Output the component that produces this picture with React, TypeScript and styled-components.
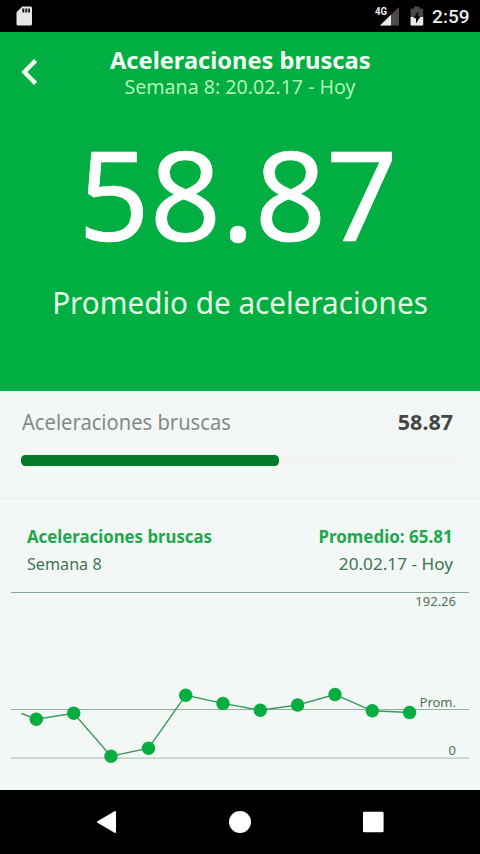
import React from 'react';
import styled, { createGlobalStyle } from 'styled-components';

const GlobalStyle = createGlobalStyle`
  *, *::before, *::after { box-sizing: border-box; }
  body { margin: 0; background: #000; }
`;

const Screen = styled.div`
  display: flex;
  flex-direction: column;
  width: 480px;
  height: 854px;
  overflow: hidden;
  background: #f3f7f5;
  font-family: "Noto Sans", "Open Sans", sans-serif;
  white-space: nowrap;
`;

const StatusBar = styled.div`
  display: flex;
  align-items: center;
  justify-content: space-between;
  height: 32px;
  flex: none;
  padding: 0 10.5px 0 16px;
  background: #000;
  color: #ececec;
`;

const StatusIcons = styled.div`
  display: flex;
  align-items: center;
`;

const Clock = styled.span`
  margin-left: 8.5px;
  font: 500 19px/32px Roboto, sans-serif;
  padding-top: 1px;
`;

const Hero = styled.header`
  display: flex;
  flex-direction: column;
  height: 359px;
  flex: none;
  background: #00ae41;
  color: #fff;
`;

const TitleBar = styled.div`
  display: grid;
  grid-template-columns: 60px 1fr 60px;
  padding-top: 14px;
`;

const BackButton = styled.button`
  display: flex;
  align-items: center;
  height: 52px;
  padding: 0 0 0 21px;
  border: 0;
  background: none;
`;

const TitleGroup = styled.div`
  display: flex;
  flex-direction: column;
  align-items: center;
`;

interface Stretch { $x?: number; $from?: 'left' | 'center' | 'right' }

const Label = styled.span<Stretch>`
  display: block;
  transform: scaleX(${p => p.$x ?? 1});
  transform-origin: ${p => p.$from ?? 'left'} center;
`;

const Title = styled(Label)`
  font-size: 24px;
  font-weight: 700;
  line-height: 28px;
  color: #f4fff4;
`;

const Subtitle = styled(Label)`
  font-size: 19.6px;
  line-height: 25px;
  color: #b0f5b8;
`;

const BigValue = styled(Label)`
  margin-top: 24px;
  padding-right: 4px;
  font-size: 125px;
  line-height: 140px;
  text-align: center;
  -webkit-text-stroke: 0.7px #fff;
`;

const Caption = styled(Label)`
  margin-top: 19px;
  font-size: 31px;
  line-height: 40px;
  text-align: center;
  color: #e2fbe2;
`;

const Stat = styled.section`
  height: 108px;
  flex: none;
  padding: 16px 20px 0 21px;
  border-bottom: 1px solid #e8eeea;
`;

const Row = styled.div`
  display: flex;
  justify-content: space-between;
`;

const StatName = styled(Label)`
  margin-left: 0.5px;
  font-size: 21.5px;
  line-height: 30px;
  color: #858a87;
`;

const StatValue = styled(Label)`
  margin-right: 7px;
  font-size: 21.8px;
  font-weight: 700;
  line-height: 30px;
  color: #454745;
`;

const Track = styled.div`
  height: 11px;
  margin-top: 18px;
  border-radius: 5px;
  background: #f4f4f4;
`;

const Fill = styled.div`
  width: 258px;
  height: 100%;
  border-radius: 4.5px;
  background: #037a2a;
`;

const ChartCard = styled.section`
  display: flex;
  flex-direction: column;
  flex: 1;
`;

const CardHead = styled.div`
  display: grid;
  row-gap: 4px;
  height: 91px;
  align-content: start;
  padding: 25px 27px 0 26.5px;
`;

const CardTitle = styled(Label)`
  font-size: 17.4px;
  font-weight: 700;
  line-height: 24px;
  color: #20a84e;
`;

const CardText = styled(Label)`
  font-size: 17px;
  line-height: 24px;
  color: #3f7452;
`;

const ChartSvg = styled.svg`
  display: block;
  text { font-family: "Noto Sans", sans-serif; font-size: 13px; fill: #4c7558; text-anchor: end; }
`;

const NavBar = styled.nav`
  display: flex;
  justify-content: center;
  height: 64px;
  flex: none;
  background: #000;
`;

const points: [number, number][] = [
  [36.3, 129.2], [73.7, 123.2], [111, 166.2], [148.5, 158.2], [185.7, 105.3], [223, 113.4],
  [260.3, 120.3], [297.6, 115], [335, 104.5], [372.3, 120.8], [409.6, 122.5],
];

function Chart() {
  const path = [[21.5, 123.5], ...points].map(p => p.join(',')).join(' ');
  return (
    <ChartSvg width="480" height="200" viewBox="0 0 480 200">
      <g strokeWidth="1">
        <path d="M11 2.5H469" stroke="#84a892" />
        <path d="M11 119.5H469" stroke="#8fb29c" />
        <path d="M11 168.1H469" stroke="#a6bcae" />
      </g>
      <polyline points={path} fill="none" stroke="#3d9a5c" strokeWidth="1.4" />
      {points.map(([x, y]) => <circle key={x} cx={x} cy={y} r="6.7" fill="#07ae3f" />)}
      <text x="456" y="16.2">192.26</text>
      <text x="456" y="117">Prom.</text>
      <text x="456" y="165.2">0</text>
    </ChartSvg>
  );
}

const SdCardIcon = () => (
  <svg width="17" height="20" viewBox="0 0 17 20">
    <path d="M6.3 .5H14.5Q16 .5 16 2V18Q16 19.5 14.5 19.5H2Q.5 19.5 .5 18V6.2Z" fill="#e6e6e6" />
    <path d="M6.3 2.5H8.3V6.5H6.3ZM9.3 2.5H11.3V6.5H9.3ZM12.2 2.5H14V6.5H12.2Z" fill="#1c1c1c" />
  </svg>
);

const SignalText = styled.text`
  font: 700 10.5px Roboto, sans-serif;
`;

const SignalIcon = () => (
  <svg width="26" height="22" viewBox="0 0 26 22">
    <path d="M25 2V20.5H6Z" fill="#4a4a4a" />
    <path d="M17 9.8V20.5H6Z" fill="#ececec" />
    <SignalText x="1" y="10" fill="#ececec" stroke="#000" strokeWidth="1.6" paintOrder="stroke" textLength="12" lengthAdjust="spacingAndGlyphs">4G</SignalText>
  </svg>
);

const BatterySvg = styled.svg`
  margin-left: 10px;
`;

const BatteryIcon = () => (
  <BatterySvg width="14" height="20" viewBox="0 0 14 20">
    <path d="M4 .5H9.5V2.5H12Q13.2 2.5 13.2 3.7V18.3Q13.2 19.5 12 19.5H1.8Q.6 19.5 .6 18.3V3.7Q.6 2.5 1.8 2.5H4Z" fill="#484848" />
    <path d="M.6 11H13.2V18.3Q13.2 19.5 12 19.5H1.8Q.6 19.5 .6 18.3Z" fill="#ececec" />
    <path d="M8.2 5V10.4H10.6L6 17.6V12.3H3.4Z" fill="#0a0a0a" />
  </BatterySvg>
);

const BackIcon = () => (
  <svg width="17" height="28" viewBox="0 0 17 28">
    <path d="M14.6 2.5L3.4 14L14.6 25.5" fill="none" stroke="#f2fff2" strokeWidth="4.5" />
  </svg>
);

const NavIcons = () => (
  <svg width="480" height="64" viewBox="0 0 480 64" fill="#fff">
    <path d="M115 22V42L98 32Z" stroke="#fff" strokeWidth="2" strokeLinejoin="round" />
    <circle cx="240" cy="32" r="11" />
    <rect x="363" y="21.8" width="20.6" height="20.4" rx="1.3" />
  </svg>
);

export default function App() {
  return (
    <>
      <GlobalStyle />
      <Screen>
        <StatusBar>
          <SdCardIcon />
          <StatusIcons>
            <SignalIcon />
            <BatteryIcon />
            <Clock>2:59</Clock>
          </StatusIcons>
        </StatusBar>
        <Hero>
          <TitleBar>
            <BackButton aria-label="Volver"><BackIcon /></BackButton>
            <TitleGroup>
              <Title $x={0.985} $from="center">Aceleraciones bruscas</Title>
              <Subtitle $from="center">Semana 8: 20.02.17 - Hoy</Subtitle>
            </TitleGroup>
          </TitleBar>
          <BigValue $from="center">58.87</BigValue>
          <Caption $x={0.957} $from="center">Promedio de aceleraciones</Caption>
        </Hero>
        <Stat>
          <Row>
            <StatName $x={0.937}>Aceleraciones bruscas</StatName>
            <StatValue $x={0.985} $from="right">58.87</StatValue>
          </Row>
          <Track><Fill /></Track>
        </Stat>
        <ChartCard>
          <CardHead>
            <Row>
              <CardTitle $x={0.965}>Aceleraciones bruscas</CardTitle>
              <CardTitle $x={0.975} $from="right">Promedio: 65.81</CardTitle>
            </Row>
            <Row>
              <CardText $x={0.95}>Semana 8</CardText>
              <CardText $x={1.01} $from="right">20.02.17 - Hoy</CardText>
            </Row>
          </CardHead>
          <Chart />
        </ChartCard>
        <NavBar><NavIcons /></NavBar>
      </Screen>
    </>
  );
}
